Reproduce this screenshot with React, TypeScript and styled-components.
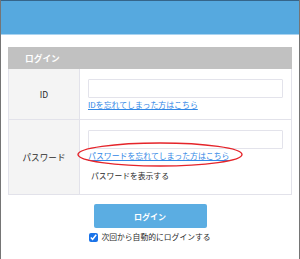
import React from 'react';
import styled, { createGlobalStyle } from 'styled-components';

const GlobalStyle = createGlobalStyle`
	html, body {
		margin: 0;
		padding: 0;
		background: #fff;
		font-family: "Noto Sans CJK JP", "Noto Sans", sans-serif;
		color: #333;
	}
`;

const Frame = styled.div`
	position: relative;
	width: 300px;
	height: 259px;
	box-sizing: border-box;
	border-left: 1px solid #757575;
	border-right: 1px solid #757575;
	overflow: hidden;
`;

const TopBar = styled.div`
	height: 33px;
	background: #56a9df;
	border-top: 1px solid #35658a;
	border-bottom: 1px solid #a9d3f0;
`;

const Content = styled.div`
	display: flex;
	flex-direction: column;
	align-items: center;
	padding: 12px 7px 0;
`;

const Table = styled.div`
	width: 100%;
	box-sizing: border-box;
	border: 1px solid #e2e2ea;
	border-top: none;
`;

const TableHead = styled.div`
	height: 22px;
	background: #c1c1c1;
	color: #fff;
	font-weight: bold;
	font-size: 8.7px;
	display: flex;
	align-items: center;
	padding-left: 17px;
	margin: 0 -1px;
`;

const Row = styled.div<{ $h: number }>`
	display: grid;
	grid-template-columns: 71px 1fr;
	height: ${p => p.$h}px;
	& + & {
		border-top: 1px solid #e2e2ea;
	}
`;

const Label = styled.div`
	background: #f4f4f4;
	border-right: 1px solid #e2e2ea;
	display: flex;
	align-items: center;
	justify-content: center;
	font-size: 8.6px;
	color: #2a2a2a;
`;

const Cell = styled.div`
	display: flex;
	flex-direction: column;
	align-items: flex-start;
	padding: 10px 8px 0 8px;
`;

const Input = styled.div`
	width: 100%;
	height: 19px;
	box-sizing: border-box;
	border: 1px solid #e3e3eb;
	border-radius: 1px;
	background: #fff;
`;

const Link = styled.a`
	margin-top: 1px;
	font-size: 7.9px;
	line-height: 12px;
	color: #3187e6;
	text-decoration: underline;
`;

const Plain = styled.span`
	margin-top: 8px;
	padding-left: 3px;
	font-size: 7.8px;
	line-height: 12px;
	color: #2a2a2a;
`;

const Button = styled.button`
	margin-top: 9px;
	width: 113px;
	height: 24px;
	border: none;
	border-radius: 2px;
	background: #5badE2;
	color: #fff;
	font-family: inherit;
	font-weight: bold;
	font-size: 8px;
`;

const Remember = styled.label`
	margin-top: 3px;
	display: flex;
	align-items: center;
	gap: 3px;
	font-size: 7.8px;
	line-height: 12px;
	color: #2a2a2a;
`;

const Check = styled.input`
	width: 9px;
	height: 9px;
	margin: 0;
	accent-color: #1a73e8;
`;

const Mark = styled.svg`
	position: absolute;
	left: 76px;
	top: 142px;
	overflow: visible;
`;

export default function App() {
	return <>
		<GlobalStyle />
		<Frame>
			<TopBar />
			<Content>
				<Table>
					<TableHead>ログイン</TableHead>
					<Row $h={50}>
						<Label>ID</Label>
						<Cell>
							<Input />
							<Link>IDを忘れてしまった方はこちら</Link>
						</Cell>
					</Row>
					<Row $h={74}>
						<Label>パスワード</Label>
						<Cell>
							<Input />
							<Link>パスワードを忘れてしまった方はこちら</Link>
							<Plain>パスワードを表示する</Plain>
						</Cell>
					</Row>
				</Table>
				<Button>ログイン</Button>
				<Remember>
					<Check type="checkbox" defaultChecked />
					次回から自動的にログインする
				</Remember>
			</Content>
			<Mark width="166" height="25" viewBox="0 0 166 25">
				<ellipse cx="83" cy="12.5" rx="82" ry="11.5" fill="none" stroke="#e5242a" strokeWidth="1.4" />
			</Mark>
		</Frame>
	</>;
}
